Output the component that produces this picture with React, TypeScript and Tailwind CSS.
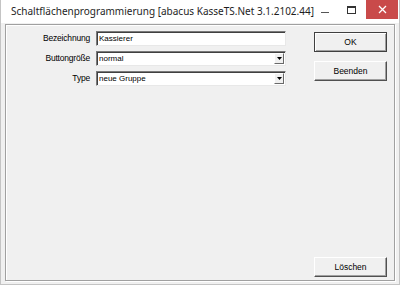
import React from "react";

const sunken =
  "border border-t-[#7a7a7a] border-l-[#7a7a7a] border-b-[#e8e8e8] border-r-[#e8e8e8] bg-white shadow-[inset_1px_1px_0_#404040]";

function Combo({ value }: { value: string }) {
  return (
    <div className={`${sunken} h-[15px] flex items-center pl-[2px] pr-[1px]`}>
      <span className="flex-1 truncate leading-none">{value}</span>
      <div className="w-[10px] h-[11px] bg-[#f0f0f0] border border-t-white border-l-white border-b-[#696969] border-r-[#696969] flex items-center justify-center">
        <svg width="5" height="3" viewBox="0 0 5 3">
          <path d="M0 0H5L2.5 3Z" fill="#000" />
        </svg>
      </div>
    </div>
  );
}

function Btn({ label, def }: { label: string; def?: boolean }) {
  return (
    <div
      className={`w-[73px] h-[20px] flex items-center justify-center bg-[#f0f0f0] ${
        def
          ? "border border-[#404040] shadow-[inset_1px_1px_0_#fff,inset_-1px_-1px_0_#a0a0a0]"
          : "border border-t-white border-l-white border-b-[#505050] border-r-[#505050] shadow-[inset_-1px_-1px_0_#a0a0a0]"
      }`}
    >
      {label}
    </div>
  );
}

export default function App() {
  return (
    <div
      className="w-[400px] h-[288px] bg-white text-black overflow-hidden"
      style={{ fontFamily: '"Liberation Sans", Arial, sans-serif' }}
    >
      <div className="w-[400px] h-[285px] flex flex-col border-x border-b border-[#c4c4c4] bg-[#f0f0f0]">
        <div className="h-[23px] bg-white flex items-start shrink-0">
          <div
            className="pl-[10px] pt-[4px] text-[10px] text-[#1e1e1e] whitespace-nowrap shrink-0"
            style={{ fontFamily: '"Noto Sans", "Open Sans", sans-serif' }}
          >
            Schaltflächenprogrammierung [abacus KasseTS.Net 3.1.2102.44]
          </div>
          <div className="flex-1" />
          <div className="shrink-0 w-[8px] h-[1px] bg-[#555] mt-[12px] mr-[18px]" />
          <div className="shrink-0 w-[9px] h-[8px] border border-[#333] border-t-2 mt-[6px] mr-[10px]" />
          <div className="shrink-0 w-[32px] h-[19px] bg-[#c94a4a] flex items-center justify-center mr-[1px]">
            <svg width="9" height="9" viewBox="0 0 9 9">
              <path d="M1 1L8 8M8 1L1 8" stroke="#fff" strokeWidth="1.3" />
            </svg>
          </div>
        </div>
        <div className="flex-1 px-[4px] pt-[1px] pb-[3px]">
          <div className="h-full border border-[#a0a0a0] shadow-[inset_1px_1px_0_#fff,1px_1px_0_#fff] flex text-[8px]">
            <div className="pt-[6px] grid grid-cols-[84px_190px] gap-x-[6px] gap-y-[5px] auto-rows-[15px] h-fit">
              <div className="text-right self-center text-[8.5px] tracking-[-0.2px]">Bezeichnung</div>
              <div className={`${sunken} h-[15px] flex items-center pl-[2px]`}>Kassierer</div>
              <div className="text-right self-center text-[8.5px] tracking-[-0.2px]">Buttongröße</div>
              <Combo value="normal" />
              <div className="text-right self-center text-[8.5px] tracking-[-0.2px]">Type</div>
              <Combo value="neue Gruppe" />
            </div>
            <div className="ml-[28px] pt-[7px] pb-[3px] flex flex-col gap-[9px] text-[8.5px]">
              <Btn label="OK" def />
              <Btn label="Beenden" />
              <div className="flex-1" />
              <Btn label="Löschen" />
            </div>
          </div>
        </div>
      </div>
    </div>
  );
}
